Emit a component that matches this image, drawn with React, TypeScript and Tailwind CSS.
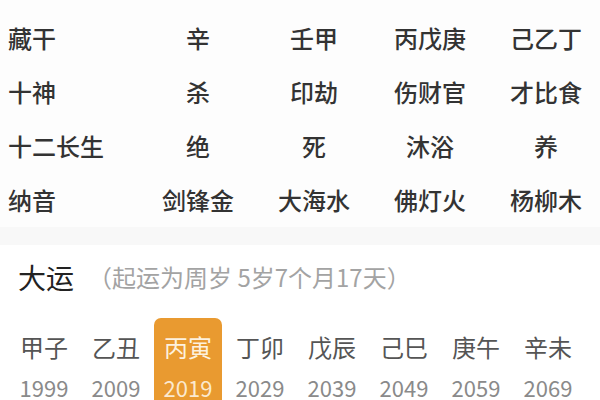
const rows: { label: string, cells: string[] }[] = [
  { label: '藏干', cells: ['辛', '壬甲', '丙戊庚', '己乙丁'] },
  { label: '十神', cells: ['杀', '印劫', '伤财官', '才比食'] },
  { label: '十二长生', cells: ['绝', '死', '沐浴', '养'] },
  { label: '纳音', cells: ['剑锋金', '大海水', '佛灯火', '杨柳木'] },
]

const dayun = [
  { gz: '甲子', year: '1999' },
  { gz: '乙丑', year: '2009' },
  { gz: '丙寅', year: '2019', active: true },
  { gz: '丁卯', year: '2029' },
  { gz: '戊辰', year: '2039' },
  { gz: '己巳', year: '2049' },
  { gz: '庚午', year: '2059' },
  { gz: '辛未', year: '2069' },
]

export default function App() {
  return (
    <div
      className="w-[600px] h-[400px] overflow-hidden bg-white"
      style={{ fontFamily: '"Noto Sans CJK SC", "Noto Sans", sans-serif' }}
    >
      <div className="pt-[11px] bg-[#fdfdfd]">
        {rows.map((row) => (
          <div key={row.label} className="grid grid-cols-[140px_repeat(4,116px)] h-[54px] items-center text-[24px] font-medium text-[#333]">
            <div className="pl-[8px]">{row.label}</div>
            {row.cells.map((c, i) => (
              <div key={i} className="text-center">{c}</div>
            ))}
          </div>
        ))}
      </div>
      <div className="h-[18px] bg-[#f8f8f8]" />
      <div className="flex items-center pl-[18px] pt-[11px] h-[53px]">
        <span className="text-[28px] leading-[42px] text-[#222]">大运</span>
        <span className="ml-[14px] text-[24px] leading-[42px] text-[#a3a3a3]">（起运为周岁 5岁7个月17天）</span>
      </div>
      <div className="grid grid-cols-8 w-[576px] ml-[8px] mt-[20px]">
        {dayun.map((d) => (
          <div
            key={d.gz}
            className={`flex flex-col items-center h-[90px] pt-[12px] rounded-t-[7px] ${d.active ? 'bg-[#e99a30] mx-[2px]' : ''}`}
          >
            <span className={`text-[24px] leading-[34px] ${d.active ? 'text-[#fdf1df]' : 'text-[#555]'}`}>{d.gz}</span>
            <span className={`text-[22px] leading-[30px] mt-[8px] ${d.active ? 'text-[#fbe9cf]' : 'text-[#8a8a8a]'}`}>{d.year}</span>
          </div>
        ))}
      </div>
    </div>
  )
}
